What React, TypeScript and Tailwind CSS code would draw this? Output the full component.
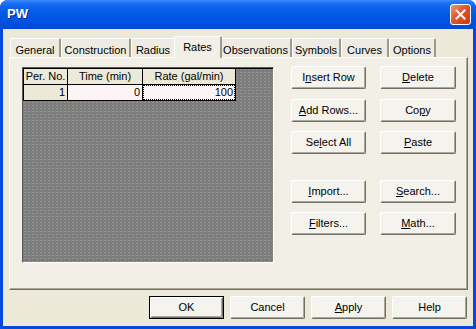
import React from "react";

const font = { fontFamily: '"Liberation Sans", Arial, sans-serif' };

function U({ children }: { children: React.ReactNode }) {
  return <span className="underline underline-offset-[1px] decoration-1">{children}</span>;
}

function Btn({ children, w = "w-[75px]", def = false }: { children: React.ReactNode; w?: string; def?: boolean }) {
  return (
    <div className={`${w} h-[23px] ${def ? "border border-black" : ""} flex`}>
      <div className="flex-1 flex items-center justify-center bg-[#f4f3ee] border-t border-l border-t-white border-l-white border-r border-b border-r-[#716f64] border-b-[#716f64] shadow-[inset_-1px_-1px_0_#aca899] rounded-[2px] text-[11px] text-black leading-none">
        <span className="-mt-[1px]">{children}</span>
      </div>
    </div>
  );
}

function Tab({ label, w, sel = false }: { label: string; w: string; sel?: boolean }) {
  if (sel) {
    return (
      <div className={`${w} h-[22px] -mx-[2px] relative z-10 bg-[#f1efe6] border-t border-l border-t-white border-l-white border-r-2 border-r-[#9d9a8a] rounded-t-[2px] flex items-start justify-center pt-[2px] text-[11px] text-black`}>
        {label}
      </div>
    );
  }
  return (
    <div className={`${w} h-[19px] mt-[2px] bg-[#eeece2] border-t border-l border-t-white border-l-white border-r-2 border-r-[#9d9a8a] rounded-t-[2px] flex items-start justify-center pt-[3px] text-[11px] text-black`}>
      {label}
    </div>
  );
}

export default function App() {
  return (
    <div className="w-[476px] h-[329px] bg-white" style={font}>
      <div className="w-[476px] h-[329px] rounded-t-[8px] bg-[#0548de] flex flex-col overflow-hidden">
        {/* title bar */}
        <div className="h-[29px] flex items-center justify-between pl-[7px] pr-[5px] bg-[linear-gradient(to_bottom,#3a8cfb_0%,#1f73f5_10%,#0c62ec_25%,#0058e6_55%,#0051e0_80%,#0047d4_100%)]">
          <span className="text-white font-bold text-[13px] [text-shadow:1px_1px_0_#0a2a8a] pb-[2px]">PW</span>
          <div className="w-[21px] h-[21px] rounded-[3px] border border-white bg-[linear-gradient(to_bottom_right,#f09a7a,#e0552b_45%,#c63a12)] flex items-center justify-center">
            <svg width="11" height="11" viewBox="0 0 11 11">
              <path d="M1.5 1.5 L9.5 9.5 M9.5 1.5 L1.5 9.5" stroke="white" strokeWidth="2" strokeLinecap="square" />
            </svg>
          </div>
        </div>
        {/* body */}
        <div className="flex-1 mx-[3px] mb-[3px] bg-[#ece9d8] flex flex-col pt-[7px] px-[6px]">
          {/* tabs */}
          <div className="flex items-start h-[21px] pl-[1px]">
            <Tab label="General" w="w-[51px]" />
            <Tab label="Construction" w="w-[70px]" />
            <Tab label="Radius" w="w-[45px]" />
            <Tab label="Rates" w="w-[48px]" sel />
            <Tab label="Observations" w="w-[72px]" />
            <Tab label="Symbols" w="w-[49px]" />
            <Tab label="Curves" w="w-[48px]" />
            <Tab label="Options" w="w-[47px]" />
          </div>
          {/* panel */}
          <div className="h-[233px] w-[459px] bg-[#f1efe6] border-t border-l border-t-white border-l-white border-r border-b border-r-[#716f64] border-b-[#716f64] shadow-[inset_-1px_-1px_0_#aca899] flex pt-[9px] pl-[12px]">
            {/* grid */}
            <div className="w-[252px] h-[196px] border-t border-l border-t-[#5a5a5a] border-l-[#5a5a5a] border-b border-r border-b-white border-r-white bg-[#7d7d7d] bg-[radial-gradient(circle,#959590_0.5px,transparent_0.8px)] bg-[length:4px_3px]">
              <div className="flex flex-col text-[11px] text-black leading-none">
                <div className="flex h-[17px] border-t border-black">
                  <div className="w-[45px] border-l border-r border-b border-black bg-[#ece9d8] flex items-center justify-center">Per. No.</div>
                  <div className="w-[75px] border-r border-b border-black bg-[#ece9d8] flex items-center justify-center">Time (min)</div>
                  <div className="w-[93px] border-r border-b border-black bg-[#ece9d8] flex items-center justify-center">Rate (gal/min)</div>
                </div>
                <div className="flex h-[16px]">
                  <div className="w-[45px] border-l border-r border-b border-black bg-[#ece9d8] flex items-center justify-end pr-[2px]">1</div>
                  <div className="w-[75px] border-r border-b border-black bg-[#fdf5f5] flex items-center justify-end pr-[2px]">0</div>
                  <div className="w-[93px] border-r border-b border-black bg-[#fdf5f5] flex">
                    <div className="flex-1 border border-dotted border-black flex items-center justify-end pr-[1px]">100</div>
                  </div>
                </div>
              </div>
            </div>
            {/* buttons */}
            <div className="flex flex-col ml-[17px] -mt-[1px]">
              <div className="flex gap-[14px]">
                <Btn>I<U>n</U>sert Row</Btn>
                <Btn w="w-[76px]"><U>D</U>elete</Btn>
              </div>
              <div className="flex gap-[14px] mt-[10px]">
                <Btn><U>A</U>dd Rows...</Btn>
                <Btn w="w-[76px]">Co<U>p</U>y</Btn>
              </div>
              <div className="flex gap-[14px] mt-[9px]">
                <Btn>Se<U>l</U>ect All</Btn>
                <Btn w="w-[76px]"><U>P</U>aste</Btn>
              </div>
              <div className="flex gap-[14px] mt-[26px]">
                <Btn><U>I</U>mport...</Btn>
                <Btn w="w-[76px]"><U>S</U>earch...</Btn>
              </div>
              <div className="flex gap-[14px] mt-[9px]">
                <Btn><U>F</U>ilters...</Btn>
                <Btn w="w-[76px]"><U>M</U>ath...</Btn>
              </div>
            </div>
          </div>
          {/* bottom buttons */}
          <div className="flex justify-end gap-[6px] mt-[6px]">
            <Btn def>OK</Btn>
            <Btn>Cancel</Btn>
            <Btn><U>A</U>pply</Btn>
            <Btn>Help</Btn>
          </div>
        </div>
      </div>
    </div>
  );
}
